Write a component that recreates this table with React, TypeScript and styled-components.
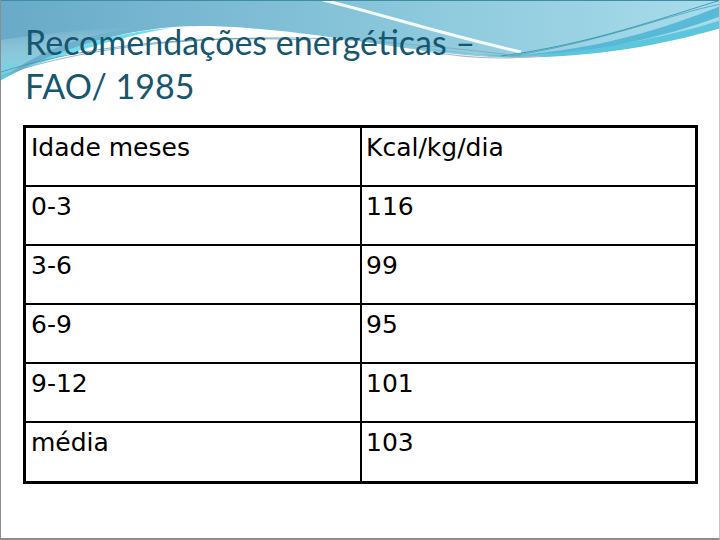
import React from 'react';
import styled, { createGlobalStyle } from 'styled-components';

const GlobalStyle = createGlobalStyle`
  html, body {
    margin: 0;
    padding: 0;
    background: #ffffff;
  }
`;

const rows: [string, string][] = [
  ['Idade meses', 'Kcal/kg/dia'],
  ['0-3', '116'],
  ['3-6', '99'],
  ['6-9', '95'],
  ['9-12', '101'],
  ['média', '103'],
];

const Slide = styled.div`
  position: relative;
  width: 720px;
  height: 540px;
  box-sizing: border-box;
  border-left: 1px solid #8c8c8c;
  border-right: 1px solid #c4c4c4;
  border-bottom: 2px solid #8c8c8c;
  background: #ffffff;
  overflow: hidden;
  display: flex;
  flex-direction: column;
`;

const Waves = styled.svg`
  position: absolute;
  left: 0;
  top: 0;
  width: 720px;
  height: 100px;
  pointer-events: none;
`;

const Title = styled.h1`
  position: relative;
  margin: 0;
  padding: 20px 0 0 24px;
  font-family: 'Lato', 'Open Sans', sans-serif;
  font-weight: 400;
  font-size: 34px;
  line-height: 44px;
  color: #17566f;
`;

const Table = styled.div`
  margin: 17px 0 0 22px;
  width: 675px;
  box-sizing: border-box;
  border: 3px solid #000000;
  display: grid;
  grid-template-columns: 334px 1fr;
`;

const Cell = styled.div<{ $right?: boolean; $last?: boolean }>`
  height: ${(p) => (p.$last ? 58 : 59)}px;
  box-sizing: border-box;
  padding: 5px 0 0 ${(p) => (p.$right ? 4 : 5)}px;
  border-left: ${(p) => (p.$right ? '2px solid #000' : 'none')};
  border-bottom: ${(p) => (p.$last ? 'none' : '2px solid #000')};
  font-family: 'DejaVu Sans', Verdana, sans-serif;
  font-size: 25px;
  line-height: 30px;
  color: #000000;
`;

const App = () => (
  <>
    <GlobalStyle />
    <Slide>
      <Waves viewBox="0 0 720 100">
        <defs>
          <linearGradient id="sky" x1="0" y1="0" x2="1" y2="0">
            <stop offset="0" stopColor="#68aac8" />
            <stop offset="0.45" stopColor="#84c2d8" />
            <stop offset="1" stopColor="#a8dcea" />
          </linearGradient>
          <linearGradient id="skyV" x1="0" y1="0" x2="0" y2="1">
            <stop offset="0" stopColor="#ffffff" stopOpacity="0" />
            <stop offset="1" stopColor="#5fd6e6" stopOpacity="0.9" />
          </linearGradient>
        </defs>
        <path d="M0 0 H720 V28 C640 48 560 60 490 57 C400 52 320 30 210 26 C130 24 60 48 0 80 Z" fill="url(#sky)" />
        <path d="M0 40 C40 34 90 28 140 27 C70 36 30 56 0 80 Z" fill="url(#skyV)" />
        <path d="M0 80 C50 52 110 32 170 28 C110 38 50 60 0 76 Z" fill="#4fd3e4" opacity="0.8" />
        <path d="M322 0 C380 14 440 34 520 52" fill="none" stroke="#ffffff" strokeWidth="3" opacity="0.9" />
        <path d="M400 45 C460 56 520 58 580 50 C640 42 690 30 720 20 V28 C660 46 580 60 500 57 Z" fill="#5cc6dc" />
        <path d="M520 55 C600 48 660 30 720 6 V16 C660 38 600 52 520 55 Z" fill="#45b2d2" opacity="0.8" />
        <path d="M500 56 C590 44 660 18 720 0" fill="none" stroke="#2b8fb0" strokeWidth="0.8" />
        <path d="M510 56 C600 42 670 14 720 4" fill="none" stroke="#2b8fb0" strokeWidth="0.6" />
        <path d="M0 76 C60 54 160 36 300 38 C380 40 450 48 520 56" fill="none" stroke="#7ea6b6" strokeWidth="0.8" />
        <path d="M0 72 C70 50 170 34 310 40" fill="none" stroke="#3f8ea8" strokeWidth="0.7" />
        <path d="M420 50 C460 58 500 60 540 56" fill="none" stroke="#b8b8b8" strokeWidth="1.2" />
        <path d="M0 0.5 H720" stroke="#3d8ea5" strokeWidth="1" />
      </Waves>
      <Title>
        Recomendações energéticas –<br />
        FAO/ 1985
      </Title>
      <Table>
        {rows.map(([a, b], i) => (
          <React.Fragment key={a}>
            <Cell $last={i === rows.length - 1}>{a}</Cell>
            <Cell $right $last={i === rows.length - 1}>{b}</Cell>
          </React.Fragment>
        ))}
      </Table>
    </Slide>
  </>
);

export default App;
